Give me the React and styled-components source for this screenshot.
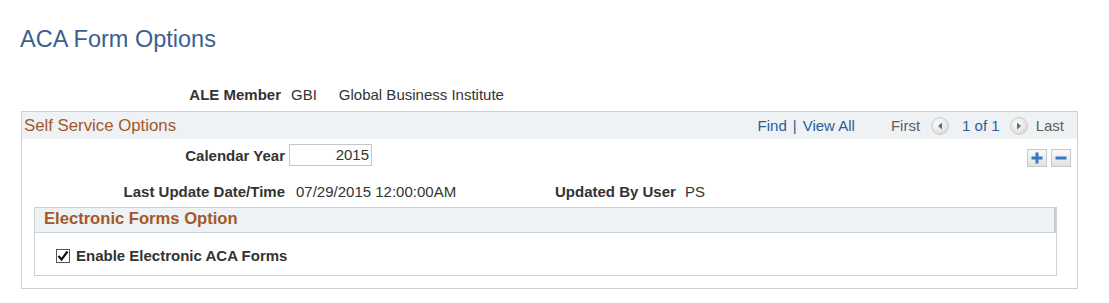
import React from 'react';
import styled, { createGlobalStyle } from 'styled-components';

const GlobalStyle = createGlobalStyle`
  body {
    margin: 0;
    background: #fff;
    font-family: "Liberation Sans", Arial, sans-serif;
    color: #333;
  }
`;

const Page = styled.div`
  width: 1109px;
  height: 303px;
  padding-left: 21px;
  box-sizing: border-box;
  overflow: hidden;
`;

const Title = styled.h1`
  margin: 0;
  padding-top: 26px;
  margin-left: -1px;
  font-size: 23.5px;
  line-height: 26px;
  font-weight: normal;
  color: #3c5f8f;
`;

const Row = styled.div`
  display: flex;
  align-items: center;
  font-size: 15px;
  line-height: 17px;
`;

const Label = styled.span`
  width: ${p => (p.$width ? `${p.$width}px` : 'auto')};
  text-align: right;
  font-weight: bold;
  color: #333;
  flex-shrink: 0;
`;

const Value = styled.span`
  margin-left: ${p => p.$gap ?? 10}px;
  width: ${p => (p.$width ? `${p.$width}px` : 'auto')};
  color: #333;
  white-space: nowrap;
  flex-shrink: 0;
`;

const MemberRow = styled(Row)`
  margin-top: 34px;
`;

const Section = styled.div`
  margin-top: 8px;
  width: 1057px;
  height: 178px;
  box-sizing: border-box;
  border: 1px solid #cdd0d5;
`;

const SectionHeader = styled.div`
  display: flex;
  align-items: center;
  height: 27px;
  background: #eef2f4;
  padding: 0 13px 0 2px;
  font-size: 15px;
`;

const SectionTitle = styled.span`
  flex: 1;
  font-size: 16.8px;
  color: #a3582a;
`;

const NavLink = styled.span`
  color: #2c5c99;
`;

const Sep = styled.span`
  color: #2c5c99;
  margin: 0 6px;
`;

const Counter = styled.span`
  color: ${p => (p.$link ? '#2c5c99' : '#5e5e5e')};
  margin-left: ${p => p.$ml || 0}px;
`;

const ArrowBtn = styled.span`
  display: inline-flex;
  align-items: center;
  justify-content: center;
  width: 18px;
  height: 18px;
  margin-left: ${p => p.$ml || 0}px;
  border-radius: 50%;
  box-sizing: border-box;
  border: 1px solid #cccccc;
  background: radial-gradient(circle at 40% 35%, #ffffff 0%, #e6e6e6 55%, #c8c8c8 100%);
`;

const SectionBody = styled.div`
  padding: 5px 6px 0 0;
`;

const YearRow = styled(Row)`
  justify-content: space-between;
  align-items: flex-end;
`;

const YearInput = styled.span`
  display: inline-block;
  margin-left: 4px;
  width: 83px;
  height: 22px;
  box-sizing: border-box;
  border: 1px solid #c6c6c6;
  text-align: right;
  padding-right: 2px;
  line-height: 20px;
  font-size: 15px;
  color: #333;
`;

const RowButtons = styled.div`
  display: flex;
  gap: 4px;
  margin-bottom: -1px;
`;

const SquareBtn = styled.span`
  display: inline-flex;
  align-items: center;
  justify-content: center;
  width: 20px;
  height: 18px;
  box-sizing: border-box;
  border: 1px solid #c4c7cc;
  background: linear-gradient(#fafafa, #dfe1e3);
`;

const UpdateRow = styled(Row)`
  margin-top: 17px;
`;

const SubSection = styled.div`
  margin: 7px 14px 0 12px;
  border: 1px solid #cdd0d5;
  height: 69px;
  box-sizing: border-box;
`;

const SubHeader = styled.div`
  height: 24px;
  line-height: 22px;
  background: #eef2f4;
  border-bottom: 1px solid #cdd0d5;
  border-right: 2px solid #c9ccd1;
  padding-left: 9px;
  font-size: 16.6px;
  font-weight: bold;
  color: #a3582a;
`;

const CheckRow = styled.label`
  display: flex;
  align-items: center;
  padding: 14px 0 0 21px;
  font-size: 15px;
  font-weight: bold;
  color: #333;
`;

const CheckBox = styled.span`
  display: inline-flex;
  align-items: center;
  justify-content: center;
  width: 14px;
  height: 14px;
  box-sizing: border-box;
  border: 1px solid #555;
  background: #fff;
  margin-right: 6px;
`;

function Arrow({ dir, ml }) {
  return (
    <ArrowBtn $ml={ml}>
      <svg width="6" height="8" viewBox="0 0 6 8">
        {dir === 'left' ? (
          <polygon points="5,0.5 5,7.5 1,4" fill="#6b6b6b" />
        ) : (
          <polygon points="1,0.5 1,7.5 5,4" fill="#6b6b6b" />
        )}
      </svg>
    </ArrowBtn>
  );
}

export default function App() {
  return (
    <Page>
      <GlobalStyle />
      <Title>ACA Form Options</Title>
      <MemberRow>
        <Label $width={260}>ALE Member</Label>
        <Value>GBI</Value>
        <Value $gap={22}>Global Business Institute</Value>
      </MemberRow>
      <Section>
        <SectionHeader>
          <SectionTitle>Self Service Options</SectionTitle>
          <NavLink>Find</NavLink>
          <Sep>|</Sep>
          <NavLink>View All</NavLink>
          <Counter $ml={36}>First</Counter>
          <Arrow dir="left" ml={11} />
          <Counter $link $ml={13}>1 of 1</Counter>
          <Arrow dir="right" ml={10} />
          <Counter $ml={8}>Last</Counter>
        </SectionHeader>
        <SectionBody>
          <YearRow>
            <Row>
              <Label $width={263}>Calendar Year</Label>
              <YearInput>2015</YearInput>
            </Row>
            <RowButtons>
              <SquareBtn>
                <svg width="12" height="12" viewBox="0 0 12 12">
                  <rect x="0.5" y="4.5" width="11" height="3" fill="#3a78c0" />
                  <rect x="4.5" y="0.5" width="3" height="11" fill="#3a78c0" />
                </svg>
              </SquareBtn>
              <SquareBtn>
                <svg width="12" height="12" viewBox="0 0 12 12">
                  <rect x="0.5" y="4.5" width="11" height="3" fill="#3a78c0" />
                </svg>
              </SquareBtn>
            </RowButtons>
          </YearRow>
          <UpdateRow>
            <Label $width={263}>Last Update Date/Time</Label>
            <Value $gap={11} $width={259}>07/29/2015 12:00:00AM</Value>
            <Label>Updated By User</Label>
            <Value $gap={9}>PS</Value>
          </UpdateRow>
          <SubSection>
            <SubHeader>Electronic Forms Option</SubHeader>
            <CheckRow>
              <CheckBox>
                <svg width="12" height="12" viewBox="0 0 12 12">
                  <polyline points="1.5,6 4.5,9.5 10.5,1.5" fill="none" stroke="#111" strokeWidth="2.2" />
                </svg>
              </CheckBox>
              Enable Electronic ACA Forms
            </CheckRow>
          </SubSection>
        </SectionBody>
      </Section>
    </Page>
  );
}
